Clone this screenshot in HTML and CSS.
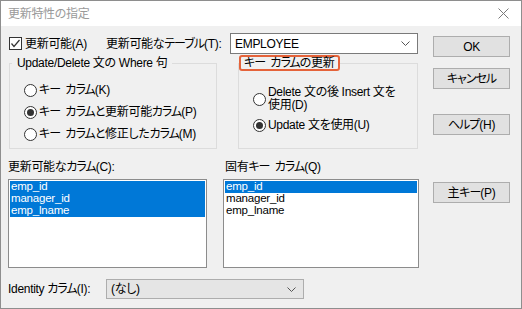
FILE: index.html
```html
<!DOCTYPE html>
<html lang="ja">
<head>
<meta charset="utf-8">
<title>更新特性の指定</title>
<link rel="stylesheet" href="styles.css">
</head>
<body>
<div class="window">
  <div class="titlebar">
    <span class="title">更新特性の指定</span>
    <svg class="close" width="11" height="11" viewBox="0 0 11 11"><path d="M0.5 0.5 L10.5 10.5 M10.5 0.5 L0.5 10.5" stroke="#7a7a7a" stroke-width="1" fill="none"/></svg>
  </div>
  <div class="content">
    <div class="left">
      <div class="row1">
        <div class="chk-wrap">
          <span class="checkbox"><svg width="11" height="11" viewBox="0 0 11 11"><path d="M1.5 5.5 L4 8.5 L9.5 2" stroke="#333" stroke-width="1.2" fill="none"/></svg></span>
          <span class="lbl">更新可能(A)</span>
        </div>
        <span class="lbl table-lbl">更新可能な<span class="k">テーブル</span>(T):</span>
        <div class="combo white">
          <span class="combo-text">EMPLOYEE</span>
          <svg class="chev" width="9" height="5" viewBox="0 0 9 5"><path d="M0.5 0.5 L4.5 4.5 L8.5 0.5" stroke="#555" stroke-width="1" fill="none"/></svg>
        </div>
      </div>

      <div class="groups">
        <fieldset class="group g1">
          <legend class="legend">Update/Delete 文の Where 句</legend>
          <div class="group-body">
            <div class="radio-row"><span class="radio"></span><span class="lbl"><span class="k">キー カラム</span>(K)</span></div>
            <div class="radio-row"><span class="radio on"></span><span class="lbl"><span class="k">キー カラム</span>と更新可能<span class="k">カラム</span>(P)</span></div>
            <div class="radio-row"><span class="radio"></span><span class="lbl"><span class="k">キー カラム</span>と修正した<span class="k">カラム</span>(M)</span></div>
          </div>
        </fieldset>
        <fieldset class="group g2">
          <legend class="legend hl"><span class="k">キー カラム</span>の更新</legend>
          <div class="group-body">
            <div class="radio-row two"><span class="radio"></span><span class="lbl">Delete 文の後 Insert 文を<br>使用(D)</span></div>
            <div class="radio-row last"><span class="radio on"></span><span class="lbl">Update 文を使用(U)</span></div>
          </div>
        </fieldset>
      </div>

      <div class="lists">
        <div class="list-col c1">
          <div class="list-lbl">更新可能な<span class="k">カラム</span>(C):</div>
          <div class="listbox">
            <div class="item sel">emp_id</div>
            <div class="item sel">manager_id</div>
            <div class="item sel">emp_lname</div>
          </div>
        </div>
        <div class="list-col c2">
          <div class="list-lbl">固有<span class="k">キー カラム</span>(Q)</div>
          <div class="listbox">
            <div class="item sel">emp_id</div>
            <div class="item">manager_id</div>
            <div class="item">emp_lname</div>
          </div>
        </div>
      </div>

      <div class="identity">
        <span class="lbl id-lbl">Identity <span class="k">カラム</span>(I):</span>
        <div class="combo grey">
          <span class="combo-text">(なし)</span>
          <svg class="chev" width="9" height="5" viewBox="0 0 9 5"><path d="M0.5 0.5 L4.5 4.5 L8.5 0.5" stroke="#555" stroke-width="1" fill="none"/></svg>
        </div>
      </div>
    </div>

    <div class="right">
      <div class="btn b-ok">OK</div>
      <div class="btn b-cancel"><span class="k">キャンセル</span></div>
      <div class="btn b-help"><span class="k">ヘルプ</span>(H)</div>
      <div class="btn b-key">主<span class="k">キー</span>(P)</div>
    </div>
  </div>
</div>
</body>
</html>
```

FILE: styles.css
```css
* { box-sizing: border-box; }
html, body { margin: 0; padding: 0; background: #fff; }
body {
  font-family: "Liberation Sans", "Noto Sans CJK JP", sans-serif;
  font-size: 12px;
  color: #000;
  font-feature-settings: "palt";
  letter-spacing: -0.3px;
}
.k { letter-spacing: -1px; word-spacing: 3px; }
.window {
  width: 522px;
  height: 309px;
  border: 1px solid #8e8e8e;
  background: #f0f0f0;
  display: flex;
  flex-direction: column;
}
.titlebar {
  height: 25px;
  background: #fff;
  display: flex;
  align-items: center;
  padding-left: 7px;
  padding-right: 12px;
  flex-shrink: 0;
}
.title { color: #9a9a9a; font-size: 12px; line-height: 14px; }
.close { margin-left: auto; }
.content {
  display: flex;
  padding-left: 7px;
}
.left {
  width: 411px;
  display: flex;
  flex-direction: column;
}
.lbl { line-height: 14px; white-space: nowrap; }
.row1 {
  margin-top: 7px;
  height: 21px;
  display: flex;
  align-items: center;
}
.chk-wrap {
  width: 98px;
  display: flex;
  align-items: center;
}
.checkbox {
  width: 13px;
  height: 13px;
  margin-left: 1px;
  margin-right: 3px;
  border: 1px solid #333;
  background: #fff;
  display: flex;
  align-items: center;
  justify-content: center;
}
.table-lbl { width: 124px; }
.combo {
  height: 21px;
  border: 1px solid #7a7a7a;
  display: flex;
  align-items: center;
  padding-left: 4px;
  padding-right: 7px;
}
.combo.white { width: 188px; background: #fff; }
.combo.grey { width: 198px; background: #e5e5e5; border-color: #adadad; height: 20px; }
.combo-text { line-height: 14px; }
.chev { margin-left: auto; }

.groups {
  margin-top: 1px;
  display: flex;
}
.group {
  margin: 0;
  padding: 0;
  height: 94px;
  border: 1px solid #dcdcdc;
  min-width: 0;
}
.g1 { width: 208px; margin-left: 1px; }
.g2 { width: 180px; margin-left: 21px; }
.group-body { padding-left: 14px; }
.legend {
  height: 16px;
  line-height: 12px;
  padding: 0 3px;
  border: 2px solid transparent;
  white-space: nowrap;
}
.g1 .legend { margin-left: 2px; }
.g2 .legend { margin-left: 0; }
.legend.hl {
  border-color: #e5633a;
  border-radius: 3px;
  padding: 0 4px 0 3px;
}
.radio-row {
  display: flex;
  align-items: center;
  height: 22px;
}
.g1 .radio-row:first-child { margin-top: 8px; }
.g2 .radio-row.two { margin-top: 13px; height: 30px; }
.g2 .radio-row.two .lbl { line-height: 13px; }
.g2 .radio-row.last { margin-top: 0; }
.radio {
  width: 13px;
  height: 13px;
  border: 1px solid #333;
  border-radius: 50%;
  background: #fff;
  margin-right: 2px;
  flex-shrink: 0;
  display: flex;
  align-items: center;
  justify-content: center;
}
.radio.on::after {
  content: "";
  width: 7px;
  height: 7px;
  border-radius: 50%;
  background: #333;
}

.lists {
  margin-top: 11px;
  display: flex;
}
.list-col { display: flex; flex-direction: column; }
.c1 { width: 199px; }
.c2 { width: 196px; margin-left: 16px; }
.c2 .list-lbl { padding-left: 2px; }
.list-lbl { height: 15px; line-height: 15px; white-space: nowrap; }
.listbox {
  margin-top: 4px;
  height: 89px;
  border: 1px solid #8c8c8c;
  background: #fff;
  padding: 1px;
}
.item {
  height: 12px;
  line-height: 11px;
  font-size: 11.5px;
  letter-spacing: -0.2px;
  padding-left: 1px;
  white-space: nowrap;
}
.item.sel { background: #0078d7; color: #fff; }

.identity {
  margin-top: 11px;
  display: flex;
  align-items: center;
  height: 20px;
}
.id-lbl { width: 98px; }

.right {
  margin-left: 14px;
  display: flex;
  flex-direction: column;
  width: 77px;
}
.btn {
  height: 21px;
  background: #e1e1e1;
  border: 1px solid #adadad;
  display: flex;
  align-items: center;
  justify-content: center;
  line-height: 14px;
}
.b-ok { margin-top: 10px; }
.b-cancel { margin-top: 11px; }
.b-help { margin-top: 25px; }
.b-key { margin-top: 47px; }
```
